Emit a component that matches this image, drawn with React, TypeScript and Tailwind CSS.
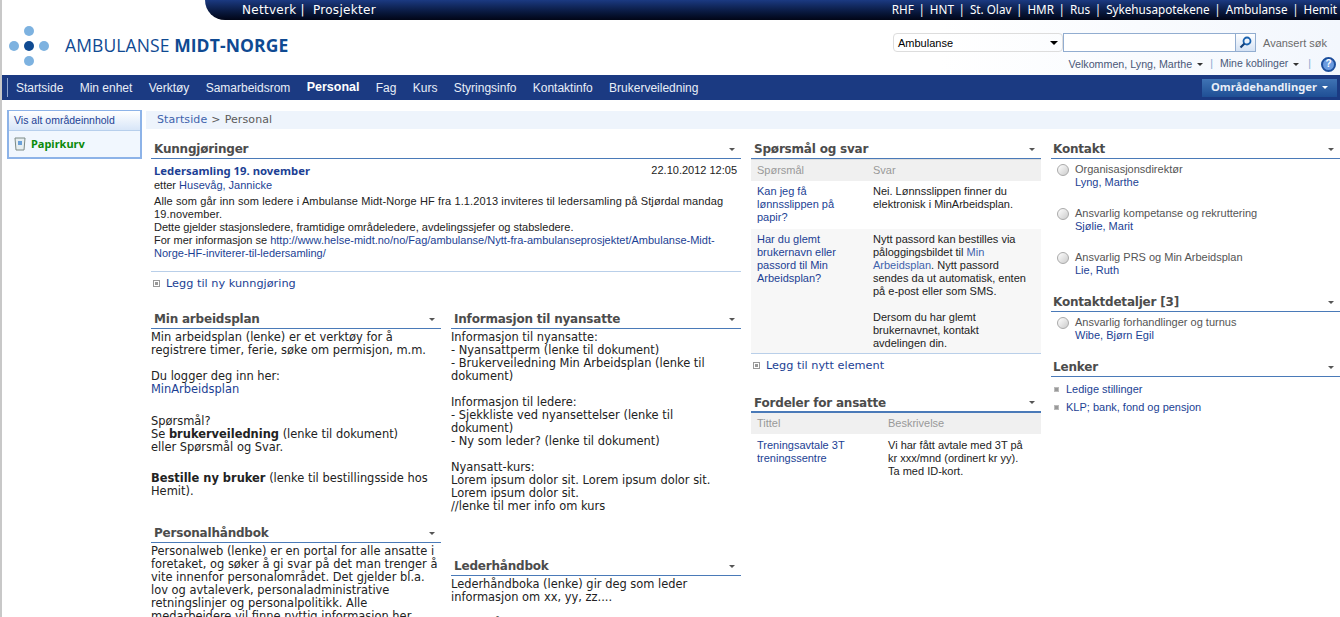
import type { ReactNode } from "react";

const tahoma = "font-['Liberation_Sans',Arial,sans-serif]";
const tahomaBold = "font-['Noto_Sans',sans-serif] font-bold";
const verdana = "font-['DejaVu_Sans',sans-serif]";

const siteLinks = ["RHF", "HNT", "St. Olav", "HMR", "Rus", "Sykehusapotekene", "Ambulanse", "Hemit"];
const navLinks = ["Startside", "Min enhet", "Verktøy", "Samarbeidsrom", "Personal", "Fag", "Kurs", "Styringsinfo", "Kontaktinfo", "Brukerveiledning"];

function Caret({ color = "border-t-[#555]" }: { color?: string }) {
  return <span className={`inline-block w-0 h-0 border-x-[3px] border-x-transparent border-t-[3px] ${color}`} />;
}

function PartHeader({ title, className = "" }: { title: string; className?: string }) {
  return (
    <div className={`flex items-center justify-between h-[19px] border-b border-[#4a7ab8] pl-[3px] pr-[6px] ${className}`}>
      <span className={`${verdana} font-bold text-[12px] tracking-[-0.2px] text-[#4c4c4c]`}>{title}</span>
      <Caret />
    </div>
  );
}

function AddLink({ label }: { label: string }) {
  return (
    <div className={`flex items-center gap-[6px] pl-[2px] text-[#1c3f94] ${verdana} text-[11.3px] leading-[13px]`}>
      <span className="flex items-center justify-center w-[7px] h-[7px] border border-[#999]">
        <span className="w-[3px] h-[3px] bg-[#999]" />
      </span>
      {label}
    </div>
  );
}

function Person({ role, name }: { role: string; name: string }) {
  return (
    <div className={`flex gap-[6px] pl-[6px] ${tahoma} text-[11px] leading-[13px]`}>
      <span className="mt-[1px] w-[12px] h-[12px] shrink-0 rounded-full border border-[#aaa] bg-gradient-to-br from-white to-[#ccc]" />
      <div>
        <div className="text-[#555]">{role}</div>
        <div className="text-[#1c3f94]">{name}</div>
      </div>
    </div>
  );
}

function BodyText({ children, className = "" }: { children: ReactNode; className?: string }) {
  return <div className={`${verdana} text-[11.45px] leading-[13px] text-[#222] whitespace-pre-line ${className}`}>{children}</div>;
}

export default function App() {
  return (
    <div className={`h-[617px] w-[1340px] overflow-hidden bg-white border-l-2 border-[#c8c8c8] ${tahoma}`}>
      {/* top bar */}
      <div className="flex justify-between h-[20px]">
        <div className="w-[203px] bg-white" />
        <div className="flex-1 flex justify-between items-center rounded-bl-[20px] bg-gradient-to-b from-[#1b3a82] to-[#020617] text-white pl-[37px] pr-[3px]">
          <div className={`${verdana} flex text-[12px] tracking-[0.3px]`}>
            <span>Nettverk</span>
            <span className="ml-[4px]">|</span>
            <span className="ml-[8px]">Prosjekter</span>
          </div>
          <div className="flex font-['Noto_Sans',sans-serif] text-[11.7px]">
            {siteLinks.map((s, i) => (
              <span key={s} className="flex">
                <span className={i > 0 ? "ml-[5px]" : ""}>{s}</span>
                {i < siteLinks.length - 1 && <span className="ml-[4.6px]">|</span>}
              </span>
            ))}
          </div>
        </div>
      </div>

      {/* header */}
      <div className="flex justify-between h-[55px] bg-gradient-to-r from-white from-70% to-[#f3f7fd]">
        <div className="flex items-center pl-[7px] pb-[4px]">
          <svg width="40" height="40" viewBox="0 0 40 40">
            <circle cx="20" cy="5" r="5" fill="#7db2e0" />
            <circle cx="5" cy="20" r="5" fill="#7db2e0" />
            <circle cx="20" cy="20" r="5" fill="#0f4a92" />
            <circle cx="35" cy="20" r="5" fill="#7db2e0" />
            <circle cx="20" cy="35" r="5" fill="#7db2e0" />
          </svg>
          <span className="ml-[16px] font-['Open_Sans',sans-serif] text-[17.5px] text-[#0f4a92] tracking-[0.1px]">
            AMBULANSE <b className="font-bold">MIDT-NORGE</b>
          </span>
        </div>
        <div className="flex flex-col items-end pr-[4px] pt-[13px]">
          <div className="flex items-center h-[20px]">
            <div className="flex items-center justify-between w-[170px] h-[19px] border border-[#ddd] rounded-sm px-[4px] text-[11px] text-black">
              Ambulanse
              <span className="inline-block w-0 h-0 border-x-[4px] border-x-transparent border-t-[4px] border-t-black" />
            </div>
            <div className="w-[173px] h-[19px] border border-[#92add0] bg-white" />
            <div className="flex items-center justify-center w-[20px] h-[19px] border border-l-0 border-[#92add0] bg-gradient-to-b from-white to-[#d4e2f4]">
              <svg width="13" height="13" viewBox="0 0 13 13" fill="none">
                <circle cx="8" cy="5" r="3.5" stroke="#1a63b0" strokeWidth="1.8" />
                <path d="M5.5 7.5 1.5 11.5" stroke="#123f7a" strokeWidth="2.2" />
              </svg>
            </div>
            <span className="ml-[7px] mr-[10px] w-[63px] whitespace-nowrap text-[11px] text-[#6b6b6b]">Avansert søk</span>
          </div>
          <div className="flex items-center h-[22px] mt-[1px] text-[10.5px] text-[#4a5878]">
            <span className="text-[10.7px]">Velkommen, Lyng, Marthe</span>
            <span className="ml-[5px] flex"><Caret color="border-t-[#333]" /></span>
            <span className="ml-[7px] mr-[7px] text-[#8aa8d0]">|</span>
            Mine koblinger
            <span className="ml-[5px] flex"><Caret color="border-t-[#333]" /></span>
            <span className="ml-[9px] mr-[10px] text-[#8aa8d0]">|</span>
            <span className="flex items-center justify-center w-[15px] h-[15px] rounded-full border-2 border-[#1d4f9c] bg-[#6b9be0] text-white text-[10px] font-bold leading-none">?</span>
          </div>
        </div>
      </div>

      {/* nav */}
      <div className="flex items-center justify-between h-[25px] bg-[#1b3a82] pl-[5px] pr-[3px]">
        <div className="flex items-center h-[19px] border-l border-[#8fa6d0] pl-[8px] gap-[16.3px] text-[12px] text-[#e8eef8]">
          {navLinks.map((n) => (
            <span key={n} className={n === "Personal" ? "font-bold text-white text-[12.5px]" : ""}>{n}</span>
          ))}
        </div>
        <div className={`${tahomaBold} flex items-center justify-center gap-[5px] w-[135px] h-[18px] bg-gradient-to-b from-[#3f73b4] to-[#1f4f95] text-[11.2px] text-[#e8eef8]`}>
          Områdehandlinger
          <Caret color="border-t-white" />
        </div>
      </div>

      <div className="flex">
        {/* side */}
        <div className="w-[144px] shrink-0 pl-[5px] pt-[10px]">
          <div className="w-[135px] h-[49px] border-2 border-[#8db3e8] border-t-[1px] bg-[#f1f7fe]">
            <div className="h-[20px] pl-[5px] flex items-center text-[10.5px] text-[#1c3f94] bg-gradient-to-b from-white to-[#d8e6f8] border-b border-[#b7cfec]">
              Vis alt områdeinnhold
            </div>
            <div className={`${tahomaBold} flex items-center gap-[5px] pl-[5px] pt-[5px] text-[11px] text-[#0a8a0a]`}>
              <svg width="12" height="14" viewBox="0 0 12 14">
                <path d="M1 1h10l-1 12H2z" fill="#e6eef0" stroke="#7c8a86" />
                <rect x="4" y="4" width="4" height="4" fill="#6aa0d8" />
              </svg>
              Papirkurv
            </div>
          </div>
        </div>

        <div className="flex-1 min-w-0 pt-[11px]">
          <div className={`${verdana} flex items-center h-[18px] bg-[#eef4fc] pl-[11px] text-[11px] tracking-[0.1px] text-[#5a5a5a]`}>
            <span className="text-[#3f63ac]">Startside</span>
            <span className="mx-[4px]">&gt;</span>
            Personal
          </div>

          <div className="flex mt-[11px] pl-[5px] gap-[10px] items-start">
            {/* left block */}
            <div className="w-[590px] shrink-0">
              <PartHeader title="Kunngjøringer" />
              <div className={`${tahoma} text-[11px] leading-[13px] px-[3px] pt-[5px] text-[#222]`}>
                <div className="flex justify-between">
                  <b className={`${tahomaBold} text-[#1c3f94] text-[11.3px]`}>Ledersamling 19. november</b>
                  <span className="pr-[1px]">22.10.2012 12:05</span>
                </div>
                <div className="mt-[2px]">etter <span className="text-[#1c3f94]">Husevåg, Jannicke</span></div>
                <div className="mt-[3px]">
                  <span className="tracking-[0.12px]">Alle som går inn som ledere i Ambulanse Midt-Norge HF fra 1.1.2013 inviteres til ledersamling på Stjørdal mandag 19.november.</span><br />
                  Dette gjelder stasjonsledere, framtidige områdeledere, avdelingssjefer og stabsledere.<br />
                  For mer informasjon se <span className="text-[#1c3f94]">http://www.helse-midt.no/no/Fag/ambulanse/Nytt-fra-ambulanseprosjektet/Ambulanse-Midt-Norge-HF-inviterer-til-ledersamling/</span>
                </div>
              </div>
              <div className="mt-[11px] mb-[5px] border-t border-[#b9cfe9]" />
              <AddLink label="Legg til ny kunngjøring" />

              <div className="grid grid-cols-[290px_290px] gap-x-[10px] mt-[20px]">
                <div>
                  <PartHeader title="Min arbeidsplan" />
                  <BodyText className="pt-[2px]">
                    Min arbeidsplan (lenke) er et verktøy for å registrere timer, ferie, søke om permisjon, m.m.
                    {"\n\n"}Du logger deg inn her:{"\n"}
                    <span className="text-[#1c3f94]">MinArbeidsplan</span>
                  </BodyText>
                  <BodyText className="mt-[19px]">
                    Spørsmål?{"\n"}Se <b>brukerveiledning</b> (lenke til dokument){"\n"}eller Spørsmål og Svar.
                  </BodyText>
                  <BodyText className="mt-[18px]">
                    <b>Bestille ny bruker</b> (lenke til bestillingsside hos Hemit).
                  </BodyText>
                  <PartHeader title="Personalhåndbok" className="mt-[26px]" />
                  <BodyText className="pt-[2px]">
                    Personalweb (lenke) er en portal for alle ansatte i foretaket, og søker å gi svar på det man trenger å vite innenfor personalområdet. Det gjelder bl.a. lov og avtaleverk, personaladministrative retningslinjer og personalpolitikk. Alle medarbeidere vil finne nyttig informasjon her.
                  </BodyText>
                </div>
                <div>
                  <PartHeader title="Informasjon til nyansatte" />
                  <BodyText className="pt-[2px]">
                    Informasjon til nyansatte:{"\n"}- Nyansattperm (lenke til dokument){"\n"}- Brukerveiledning Min Arbeidsplan (lenke til dokument)
                    {"\n\n"}Informasjon til ledere:{"\n"}- Sjekkliste ved nyansettelser (lenke til{"\n"}dokument){"\n"}- Ny som leder? (lenke til dokument)
                    {"\n\n"}Nyansatt-kurs:{"\n"}Lorem ipsum dolor sit. Lorem ipsum dolor sit.{"\n"}Lorem ipsum dolor sit.{"\n"}//lenke til mer info om kurs
                  </BodyText>
                  <PartHeader title="Lederhåndbok" className="mt-[44px]" />
                  <BodyText className="pt-[2px]">
                    Lederhåndboka (lenke) gir deg som leder informasjon om xx, yy, zz....
                    {"\n\n"}Spørsmål?
                  </BodyText>
                </div>
              </div>
            </div>

            {/* middle */}
            <div className="w-[290px] shrink-0">
              <PartHeader title="Spørsmål og svar" />
              <div className="grid grid-cols-[102px_1fr] text-[11px] leading-[13px]">
                <div className="col-span-2 grid grid-cols-subgrid h-[22px] items-center bg-[#f0f0f0] text-[#999] border-t border-[#ddd]">
                  <span className="pl-[6px]">Spørsmål</span>
                  <span className="pl-[20px]">Svar</span>
                </div>
                <div className="pl-[6px] pt-[4px] pb-[5px] text-[#1c3f94]">Kan jeg få lønnsslippen på papir?</div>
                <div className="pl-[20px] pr-[10px] pt-[4px] text-[#222]">Nei. Lønnsslippen finner du elektronisk i MinArbeidsplan.</div>
                <div className="pl-[6px] pt-[4px] bg-[#f7f7f7] text-[#1c3f94]">Har du glemt brukernavn eller passord til Min Arbeidsplan?</div>
                <div className="pl-[20px] pr-[10px] pt-[4px] pb-[3px] bg-[#f7f7f7] text-[#222] whitespace-pre-line">
                  Nytt passord kan bestilles via påloggingsbildet til <span className="text-[#3f63ac]">Min Arbeidsplan</span>. Nytt passord sendes da ut automatisk, enten på e-post eller som SMS.
                  {"\n\n"}Dersom du har glemt brukernavnet, kontakt avdelingen din.
                </div>
              </div>
              <div className="border-t border-[#b9cfe9] mb-[5px]" />
              <AddLink label="Legg til nytt element" />
              <PartHeader title="Fordeler for ansatte" className="mt-[22px] border-b-2" />
              <div className="grid grid-cols-[117px_1fr] text-[11px] leading-[13px]">
                <div className="col-span-2 grid grid-cols-subgrid h-[21px] items-center bg-[#f0f0f0] text-[#999]">
                  <span className="pl-[6px]">Tittel</span>
                  <span className="pl-[20px]">Beskrivelse</span>
                </div>
                <div className="pl-[6px] pt-[5px] text-[#1c3f94]">Treningsavtale 3T treningssentre</div>
                <div className="pl-[20px] pr-[10px] pt-[5px] text-[#222]">Vi har fått avtale med 3T på kr xxx/mnd (ordinert kr yy). Ta med ID-kort.</div>
              </div>
            </div>

            {/* right */}
            <div className="flex-1 min-w-0">
              <PartHeader title="Kontakt" className="pl-[2px]!" />
              <div className="flex flex-col gap-[18px] pt-[4px]">
                <Person role="Organisasjonsdirektør" name="Lyng, Marthe" />
                <Person role="Ansvarlig kompetanse og rekruttering" name="Sjølie, Marit" />
                <Person role="Ansvarlig PRS og Min Arbeidsplan" name="Lie, Ruth" />
              </div>
              <PartHeader title="Kontaktdetaljer [3]" className="mt-[16px] pl-[2px]!" />
              <div className="pt-[4px]">
                <Person role="Ansvarlig forhandlinger og turnus" name="Wibe, Bjørn Egil" />
              </div>
              <PartHeader title="Lenker" className="mt-[16px] pl-[2px]!" />
              <div className="flex flex-col gap-[5px] pt-[6px] pl-[3px] text-[11px] leading-[13px] text-[#1c3f94]">
                {["Ledige stillinger", "KLP; bank, fond og pensjon"].map((l) => (
                  <div key={l} className="flex items-center gap-[7px]">
                    <span className="w-[5px] h-[5px] bg-[#999] border border-[#bbb]" />
                    {l}
                  </div>
                ))}
              </div>
            </div>
          </div>
        </div>
      </div>
    </div>
  );
}
